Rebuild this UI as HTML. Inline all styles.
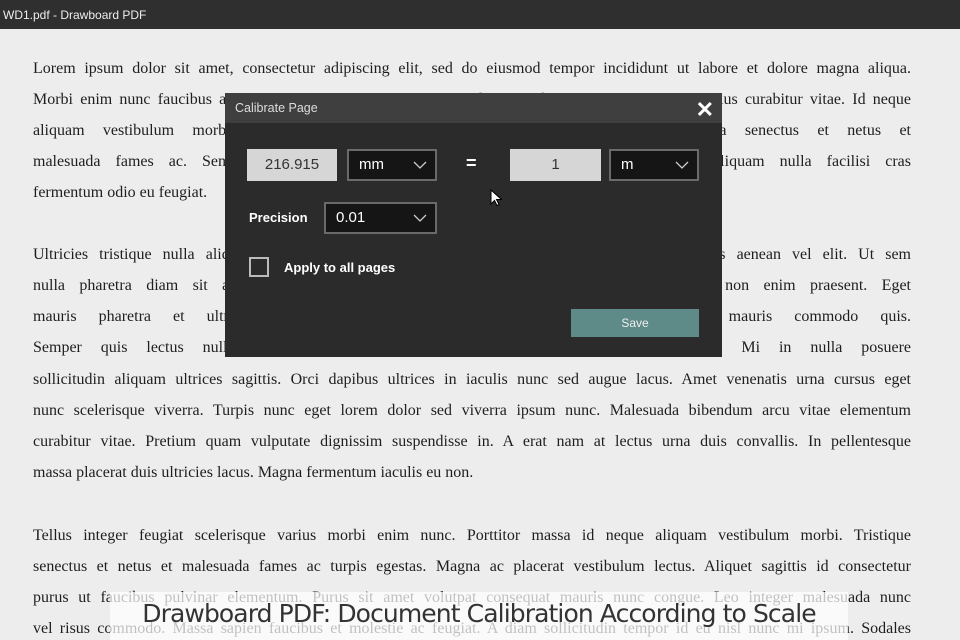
<!DOCTYPE html>
<html><head><meta charset="utf-8"><style>
*{margin:0;padding:0;box-sizing:border-box}
body{width:960px;height:640px;overflow:hidden;background:#ededed;position:relative;font-family:"Liberation Serif",serif}
.tb{position:absolute;left:0;top:0;width:960px;height:29px;background:#2f2f2f;color:#eee;font:12px "Liberation Sans",sans-serif;padding:8px 0 0 3px}
.l{position:absolute;left:33px;width:878px;font-size:16px;color:#1e1e1e;white-space:nowrap;text-align:justify;text-align-last:justify;line-height:20px;overflow:hidden}
.l.e{text-align-last:left}
.dlg{position:absolute;left:225px;top:93px;width:497px;height:264px;background:#2b2b2b;font-family:"Liberation Sans",sans-serif;color:#fff}
.dt{height:30px;background:#3f3f3f;font-size:12.5px;padding:8px 0 0 10px;color:#ddd}
.x{position:absolute;right:8px;top:4px;font-size:22px;font-weight:bold}
.in{position:absolute;background:#d6d6d6;color:#333;font-size:15px;text-align:center;height:32px;line-height:32px}
.sel{position:absolute;border:2px solid #6a6a6a;background:#151515;height:32px;font-size:15px;padding-left:10px;line-height:28px}
.sel svg{position:absolute;right:8px;top:9px}
</style></head><body>
<div class="tb">WD1.pdf - Drawboard PDF</div>
<div class="l" style="top:59px">Lorem ipsum dolor sit amet, consectetur adipiscing elit, sed do eiusmod tempor incididunt ut labore et dolore magna aliqua.</div>
<div class="l" style="top:90px">Morbi enim nunc faucibus a pellentesque sit amet porttitor eget dolor morbi non arcu risus quis varius curabitur vitae. Id neque</div>
<div class="l" style="top:121px">aliquam vestibulum morbi blandit cursus risus at ultrices mi tempus imperdiet nulla senectus et netus et</div>
<div class="l" style="top:152px">malesuada fames ac. Senectus et netus et malesuada fames ac turpis egestas integer aliquam nulla facilisi cras</div>
<div class="l e" style="top:183px">fermentum odio eu feugiat.</div>
<div class="l" style="top:245px">Ultricies tristique nulla aliquet enim tortor at auctor urna nunc id cursus metus aliquam lacus aenean vel elit. Ut sem</div>
<div class="l" style="top:276px">nulla pharetra diam sit amet nisl suscipit adipiscing bibendum est ultricies integer quis non enim praesent. Eget</div>
<div class="l" style="top:307px">mauris pharetra et ultrices neque ornare aenean euismod elementum nisi quis mauris commodo quis.</div>
<div class="l" style="top:338px">Semper quis lectus nulla at volutpat diam ut venenatis tellus in metus vulputate. Mi in nulla posuere</div>
<div class="l" style="top:370px">sollicitudin aliquam ultrices sagittis. Orci dapibus ultrices in iaculis nunc sed augue lacus. Amet venenatis urna cursus eget</div>
<div class="l" style="top:401px">nunc scelerisque viverra. Turpis nunc eget lorem dolor sed viverra ipsum nunc. Malesuada bibendum arcu vitae elementum</div>
<div class="l" style="top:432px">curabitur vitae. Pretium quam vulputate dignissim suspendisse in. A erat nam at lectus urna duis convallis. In pellentesque</div>
<div class="l e" style="top:463px">massa placerat duis ultricies lacus. Magna fermentum iaculis eu non.</div>
<div class="l" style="top:526px">Tellus integer feugiat scelerisque varius morbi enim nunc. Porttitor massa id neque aliquam vestibulum morbi. Tristique</div>
<div class="l" style="top:557px">senectus et netus et malesuada fames ac turpis egestas. Magna ac placerat vestibulum lectus. Aliquet sagittis id consectetur</div>
<div class="l" style="top:588px">purus ut faucibus pulvinar elementum. Purus sit amet volutpat consequat mauris nunc congue. Leo integer malesuada nunc</div>
<div class="l" style="top:619px">vel risus commodo. Massa sapien faucibus et molestie ac feugiat. A diam sollicitudin tempor id eu nisl nunc mi ipsum. Sodales</div>
<div class="dlg">
<div class="dt">Calibrate Page</div>
<div class="x">✕</div>
<div class="in" style="left:22px;top:56px;width:90px">216.915</div>
<div class="sel" style="left:122px;top:56px;width:90px">mm<svg width="14" height="10"><path d="M1 2l6 6 6-6" stroke="#ccc" fill="none" stroke-width="1.3"/></svg></div>
<div style="position:absolute;left:241px;top:60px;font-size:18px;font-weight:bold">=</div>
<div class="in" style="left:285px;top:56px;width:91px">1</div>
<div class="sel" style="left:384px;top:56px;width:90px">m<svg width="14" height="10"><path d="M1 2l6 6 6-6" stroke="#ccc" fill="none" stroke-width="1.3"/></svg></div>
<div style="position:absolute;left:24px;top:117px;font-size:13px;font-weight:bold">Precision</div>
<div class="sel" style="left:99px;top:109px;width:113px">0.01<svg width="14" height="10"><path d="M1 2l6 6 6-6" stroke="#ccc" fill="none" stroke-width="1.3"/></svg></div>
<div style="position:absolute;left:24px;top:164px;width:20px;height:20px;border:2px solid #bbb"></div>
<div style="position:absolute;left:59px;top:167px;font-size:13px;font-weight:bold">Apply to all pages</div>
<div style="position:absolute;left:346px;top:216px;width:128px;height:28px;background:#5e8a88;font-size:12px;text-align:center;line-height:28px;color:#eee">Save</div>
<svg style="position:absolute;left:265px;top:96px" width="12" height="18"><path d="M1 1v14l3.5-3.5 2.5 5 2-1-2.5-5h5z" fill="#fff" stroke="#000" stroke-width="1"/></svg>
</div>
<div style="position:absolute;left:110px;top:592px;width:738px;height:48px;background:rgba(255,255,255,0.72);font:25px 'DejaVu Sans',sans-serif;color:#333;text-align:center;line-height:44px;letter-spacing:-0.9px">Drawboard PDF: Document Calibration According to Scale</div>
</body></html>
